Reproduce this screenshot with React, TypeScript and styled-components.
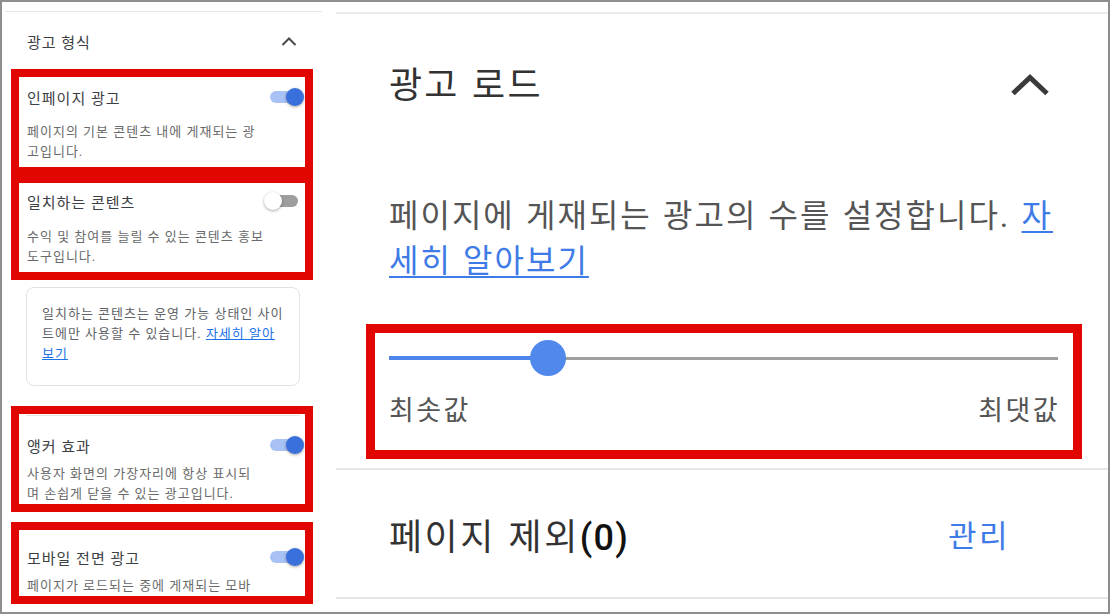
import React from "react";
import styled, { createGlobalStyle } from "styled-components";

const GlobalStyle = createGlobalStyle`
  html, body {
    margin: 0;
    padding: 0;
    background: #ffffff;
    overflow: hidden;
  }
  body {
    font-family: Roboto, "Noto Sans CJK KR", sans-serif;
  }
`;

const RED = "#e10600";

const Frame = styled.div`
  width: 1110px;
  height: 614px;
  box-sizing: border-box;
  border: 2px solid #8e8e8e;
  display: flex;
  overflow: hidden;
  background: #fff;
`;

/* ---------- left: settings sidebar ---------- */

const Sidebar = styled.aside`
  width: 320px;
  flex: none;
  padding-top: 9px;
  display: flex;
  flex-direction: column;
  letter-spacing: 1px;
`;

const Rule = styled.div<{ $inset?: number; $thick?: number; $color?: string }>`
  height: ${(p) => p.$thick ?? 1}px;
  background: ${(p) => p.$color ?? "#e6e6e6"};
  margin-left: ${(p) => p.$inset ?? 0}px;
  flex: none;
`;

const SectionHeader = styled.div`
  height: 40px;
  margin-top: 9px;
  padding: 0 25px;
  display: flex;
  align-items: center;
  justify-content: space-between;
  font-size: 15px;
  color: #3c4043;
`;

const Highlight = styled.div<{ $height: number; $gap: number }>`
  width: 302px;
  height: ${(p) => p.$height}px;
  margin: ${(p) => p.$gap}px 0 0 9px;
  box-sizing: border-box;
  border: 8px solid ${RED};
  overflow: hidden;
  flex: none;
`;

const Setting = styled.div<{ $top: number }>`
  padding: ${(p) => p.$top}px 1px 0 8px;
`;

const SettingTitle = styled.div`
  height: 20px;
  display: flex;
  align-items: center;
  justify-content: space-between;
  font-size: 15px;
  color: #3c4043;
`;

const SettingDesc = styled.p<{ $gap: number }>`
  margin: ${(p) => p.$gap}px 0 0;
  font-size: 13px;
  line-height: 19.5px;
  color: #6a6a6a;
`;

const InnerRule = styled.div`
  height: 1px;
  width: 274px;
  margin: 1px 0 0 7px;
  background: #e4e4e4;
`;

const InfoCard = styled.div`
  width: 274px;
  height: 99px;
  margin: 7px 0 0 24px;
  box-sizing: border-box;
  border: 1px solid #e2e2e2;
  border-radius: 8px;
  padding: 16px 6px 0 15px;
  font-size: 13px;
  line-height: 20px;
  color: #5f6368;
  flex: none;
`;

const SmallLink = styled.a`
  color: #1a73e8;
  text-decoration: underline;
`;

const SwitchBox = styled.span<{ $on: boolean }>`
  position: relative;
  width: 35px;
  height: 18px;
  flex: none;
  margin-right: ${(p) => (p.$on ? 0 : 5)}px;
`;

const SwitchTrack = styled.span<{ $on: boolean }>`
  position: absolute;
  left: 1px;
  right: 1px;
  top: 3px;
  height: 12px;
  border-radius: 6px;
  background: ${(p) => (p.$on ? "#a9c2f5" : "#9e9e9e")};
`;

const SwitchThumb = styled.span<{ $on: boolean }>`
  position: absolute;
  top: 0;
  ${(p) => (p.$on ? "right: 0;" : "left: 0;")}
  width: 18px;
  height: 18px;
  border-radius: 50%;
  background: ${(p) => (p.$on ? "#3a70dc" : "#ffffff")};
  box-shadow: 0 1px 3px rgba(0, 0, 0, 0.35);
`;

const Switch = ({ on }: { on: boolean }) => (
  <SwitchBox $on={on}>
    <SwitchTrack $on={on} />
    <SwitchThumb $on={on} />
  </SwitchBox>
);

const SmallChevron = () => (
  <svg width="16" height="10" viewBox="0 0 16 10">
    <polyline points="1.5,9 8,2.5 14.5,9" fill="none" stroke="#4a4a4a" strokeWidth="2" />
  </svg>
);

/* ---------- right: magnified ad load panel ---------- */

const Detail = styled.section`
  flex: 1;
  margin-left: 14px;
  padding-top: 10px;
  display: flex;
  flex-direction: column;
  word-spacing: 1.3px;
`;

const DetailHeader = styled.div`
  height: 60px;
  margin-top: 38px;
  padding: 0 58px 0 53px;
  display: flex;
  align-items: center;
  justify-content: space-between;
  font-size: 36px;
  color: #333;
  letter-spacing: 2.2px;
`;

const BigChevron = styled.svg`
  margin-top: 6px;
`;

const Lead = styled.p`
  margin: 82px 4px 0 53px;
  font-size: 32px;
  line-height: 45px;
  color: #555;
  letter-spacing: 2px;
`;

const LeadLink = styled.a`
  color: #3f7be6;
  text-decoration: underline;
  text-decoration-thickness: 2px;
  text-underline-offset: 4px;
`;

const SliderFrame = styled.div`
  width: 716px;
  height: 135px;
  margin: 40px 0 0 30px;
  box-sizing: border-box;
  border: 9px solid ${RED};
  padding: 7px 15px 0 14px;
  flex: none;
`;

const SliderRail = styled.div`
  position: relative;
  height: 36px;
  display: flex;
  align-items: center;
`;

const RailBase = styled.div`
  flex: 1;
  height: 3px;
  background: #9e9e9e;
`;

const RailFill = styled.div`
  position: absolute;
  left: 0;
  top: 16px;
  height: 4px;
  background: #4d85ea;
`;

const Knob = styled.div`
  position: absolute;
  top: 0;
  width: 36px;
  height: 36px;
  margin-left: -18px;
  border-radius: 50%;
  background: #5088ec;
`;

const RangeLabels = styled.div`
  margin: 18px -2px 0 0;
  display: flex;
  justify-content: space-between;
  font-size: 27px;
  line-height: 34px;
  color: #555;
  letter-spacing: 2.4px;
`;

const ExcludeRow = styled.div`
  height: 127px;
  padding: 0 98px 0 53px;
  display: flex;
  align-items: center;
  justify-content: space-between;
  font-size: 36px;
  color: #333;
  letter-spacing: 2.5px;
`;

const Count = styled.span`
  color: #111;
  font-family: Roboto, sans-serif;
  font-weight: 500;
  letter-spacing: 1.2px;
`;

const Manage = styled.a`
  font-size: 31px;
  color: #3f7be6;
  text-decoration: none;
`;

const Slider = ({ value }: { value: number }) => (
  <SliderRail>
    <RailBase />
    <RailFill style={{ width: `${value * 100}%` }} />
    <Knob style={{ left: `${value * 100}%` }} />
  </SliderRail>
);

export default function App() {
  return (
    <>
      <GlobalStyle />
      <Frame>
        <Sidebar>
          <Rule $inset={3} />
          <SectionHeader>
            <span>광고 형식</span>
            <SmallChevron />
          </SectionHeader>

          <Highlight $height={106} $gap={8}>
            <Setting $top={10}>
              <SettingTitle>
                인페이지 광고
                <Switch on />
              </SettingTitle>
              <SettingDesc $gap={15}>
                페이지의 기본 콘텐츠 내에 게재되는 광<br />
                고입니다.
              </SettingDesc>
            </Setting>
          </Highlight>

          <Highlight $height={105} $gap={0}>
            <Setting $top={8}>
              <SettingTitle>
                일치하는 콘텐츠
                <Switch on={false} />
              </SettingTitle>
              <SettingDesc $gap={16}>
                수익 및 참여를 늘릴 수 있는 콘텐츠 홍보<br />
                도구입니다.
              </SettingDesc>
            </Setting>
          </Highlight>

          <InfoCard>
            일치하는 콘텐츠는 운영 가능 상태인 사이<br />
            트에만 사용할 수 있습니다. <SmallLink href="#">자세히 알아<br />보기</SmallLink>
          </InfoCard>

          <Highlight $height={106} $gap={20}>
            <InnerRule />
            <Setting $top={19}>
              <SettingTitle>
                앵커 효과
                <Switch on />
              </SettingTitle>
              <SettingDesc $gap={9}>
                사용자 화면의 가장자리에 항상 표시되<br />
                며 손쉽게 닫을 수 있는 광고입니다.
              </SettingDesc>
            </Setting>
          </Highlight>

          <Highlight $height={82} $gap={10}>
            <Setting $top={17}>
              <SettingTitle>
                모바일 전면 광고
                <Switch on />
              </SettingTitle>
              <SettingDesc $gap={9}>페이지가 로드되는 중에 게재되는 모바</SettingDesc>
            </Setting>
          </Highlight>
        </Sidebar>

        <Detail>
          <Rule $thick={2} $color="#ebebeb" />
          <DetailHeader>
            <span>광고 로드</span>
            <BigChevron width="40" height="22" viewBox="0 0 40 22">
              <polyline points="3,19.5 20,3.5 37,19.5" fill="none" stroke="#3a3a3a" strokeWidth="5" />
            </BigChevron>
          </DetailHeader>
          <Lead>
            페이지에 게재되는 광고의 수를 설정합니다. <LeadLink href="#">자<br />세히 알아보기</LeadLink>
          </Lead>
          <SliderFrame>
            <Slider value={0.238} />
            <RangeLabels>
              <span>최솟값</span>
              <span>최댓값</span>
            </RangeLabels>
          </SliderFrame>
          <Rule $thick={2} $color="#e6e6e6" style={{ marginTop: 9 }} />
          <ExcludeRow>
            <span>
              페이지 제외<Count>(0)</Count>
            </span>
            <Manage href="#">관리</Manage>
          </ExcludeRow>
          <Rule $thick={2} $color="#e6e6e6" />
        </Detail>
      </Frame>
    </>
  );
}
